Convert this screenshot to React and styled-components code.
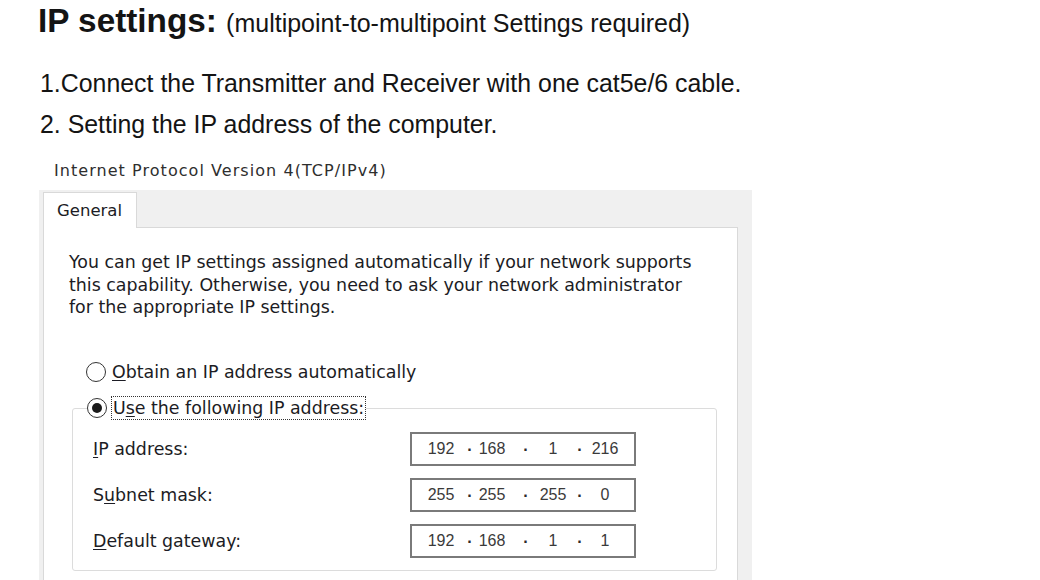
import React from "react"
import styled, { createGlobalStyle } from "styled-components"

const GlobalStyle = createGlobalStyle`
  html, body {
    margin: 0;
    padding: 0;
    background: #ffffff;
  }
`

const Page = styled.main`
  width: 1040px;
  height: 580px;
  overflow: hidden;
  padding-left: 38px;
  box-sizing: border-box;
  font-family: "Liberation Sans", Arial, sans-serif;
  color: #141414;
`

const Title = styled.h1`
  margin: 1px 0 0 0;
  font-size: 33.3px;
  line-height: 40px;
  font-weight: 700;
`

const Note = styled.span`
  font-size: 25px;
  font-weight: 400;
`

const StepList = styled.div`
  margin-top: 20px;
  display: flex;
  flex-direction: column;
`

const Step = styled.p`
  margin: 0;
  padding-left: 2px;
  font-size: 24.9px;
  line-height: 41px;
`

// Windows dialog

const Dialog = styled.section`
  margin-top: 16px;
  margin-left: 1px;
  font-family: "DejaVu Sans", Tahoma, sans-serif;
  color: #1c1c24;
`

const Caption = styled.div`
  padding-left: 15px;
  font-size: 16px;
  letter-spacing: 1.05px;
  line-height: 20px;
  color: #2e2e2e;
`

const Sheet = styled.div`
  margin-top: 9px;
  width: 713px;
  height: 400px;
  background: #f0f0f0;
  padding: 2px 14px 0 4px;
  box-sizing: border-box;
`

const TabStrip = styled.div`
  display: flex;
  position: relative;
  z-index: 1;
`

const Tab = styled.div`
  width: 94px;
  height: 36px;
  box-sizing: border-box;
  padding: 7px 0 0 13px;
  background: #ffffff;
  border: 1px solid #d9d9d9;
  border-bottom: none;
  font-size: 16.5px;
  line-height: 22px;
`

const Content = styled.div`
  background: #ffffff;
  border: 1px solid #d9d9d9;
  height: 380px;
  margin-top: -1px;
  padding: 23px 0 0 25px;
  box-sizing: border-box;
`

const Intro = styled.p`
  margin: 0;
  font-size: 17.4px;
  line-height: 22.5px;
`

const Options = styled.div`
  margin-top: 41px;
  display: flex;
  flex-direction: column;
`

const RadioRow = styled.div`
  display: flex;
  align-items: center;
  gap: 4px;
  margin-left: 17px;
  height: 24px;
`

const RadioDot = styled.span`
  width: 20px;
  height: 20px;
  box-sizing: border-box;
  border-radius: 50%;
  border: 1.5px solid #333333;
  background: #ffffff;
  display: flex;
  align-items: center;
  justify-content: center;
  flex-shrink: 0;

  &::after {
    content: "";
    width: 10px;
    height: 10px;
    border-radius: 50%;
    background: ${(p) => (p.$checked ? "#1a1a1a" : "transparent")};
  }
`

const Label = styled.span`
  font-size: 17.4px;
  line-height: 22px;
  padding: 0 1px;
  border: 1px dotted ${(p) => (p.$focused ? "#333" : "transparent")};
  background: #ffffff;
`

const Key = styled.span`
  text-decoration: underline;
  text-underline-offset: 2px;
`

const Group = styled.div`
  margin: 24px 0 0 3px;
  width: 645px;
  height: 163px;
  box-sizing: border-box;
  border: 1px solid #dcdcdc;
  border-radius: 3px;
  position: relative;
  padding: 23px 0 0 20px;
`

const GroupLegend = styled(RadioRow)`
  position: absolute;
  top: -13px;
  left: 14px;
  margin: 0;
  background: #ffffff;
`

const Fields = styled.div`
  display: flex;
  flex-direction: column;
  gap: 12px;
`

const FieldRow = styled.div`
  display: grid;
  grid-template-columns: 317px 226px;
  align-items: center;
`

const FieldLabel = styled.span`
  font-size: 17.4px;
  line-height: 22px;
`

const IpBox = styled.div`
  height: 34px;
  box-sizing: border-box;
  border: 2px solid #7a7a7a;
  display: flex;
  align-items: center;
  padding-left: 2px;
  font-family: "Liberation Sans", Arial, sans-serif;
  font-size: 16px;
  color: #3a3a3a;
`

const Octet = styled.span`
  width: ${(p) => p.$w}px;
  padding-right: ${(p) => p.$shift || 0}px;
  box-sizing: border-box;
  text-align: center;
`

const Dot = styled.span`
  width: 4px;
  display: flex;
  justify-content: center;
  font-weight: 700;
  color: #2a2a2a;
  position: relative;
  top: 1px;
`

const widths = [54, 52, 50, 46]

const IpField = ({ value }) => {
  const parts = value.split(".")
  return (
    <IpBox>
      {parts.map((part, i) => (
        <React.Fragment key={i}>
          <Octet $w={widths[i]} $shift={i === 1 ? 12 : 0}>
            {part}
          </Octet>
          {i < 3 && <Dot>·</Dot>}
        </React.Fragment>
      ))}
    </IpBox>
  )
}

const fields = [
  { before: "", key: "I", after: "P address:", value: "192.168.1.216" },
  { before: "S", key: "u", after: "bnet mask:", value: "255.255.255.0" },
  { before: "", key: "D", after: "efault gateway:", value: "192.168.1.1" },
]

const App = () => (
  <>
    <GlobalStyle />
    <Page>
      <Title>
        IP settings: <Note>(multipoint-to-multipoint Settings required)</Note>
      </Title>
      <StepList>
        <Step>1.Connect the Transmitter and Receiver with one cat5e/6 cable.</Step>
        <Step>2. Setting the IP address of the computer.</Step>
      </StepList>

      <Dialog>
        <Caption>Internet Protocol Version 4(TCP/IPv4)</Caption>
        <Sheet>
          <TabStrip>
            <Tab>General</Tab>
          </TabStrip>
          <Content>
            <Intro>
              You can get IP settings assigned automatically if your network supports
              <br />
              this capability. Otherwise, you need to ask your network administrator
              <br />
              for the appropriate IP settings.
            </Intro>
            <Options>
              <RadioRow>
                <RadioDot />
                <Label>
                  <Key>O</Key>btain an IP address automatically
                </Label>
              </RadioRow>
              <Group>
                <GroupLegend>
                  <RadioDot $checked />
                  <Label $focused>
                    U<Key>s</Key>e the following IP address:
                  </Label>
                </GroupLegend>
                <Fields>
                  {fields.map((f) => (
                    <FieldRow key={f.value}>
                      <FieldLabel>
                        {f.before}
                        <Key>{f.key}</Key>
                        {f.after}
                      </FieldLabel>
                      <IpField value={f.value} />
                    </FieldRow>
                  ))}
                </Fields>
              </Group>
            </Options>
          </Content>
        </Sheet>
      </Dialog>
    </Page>
  </>
)

export default App
